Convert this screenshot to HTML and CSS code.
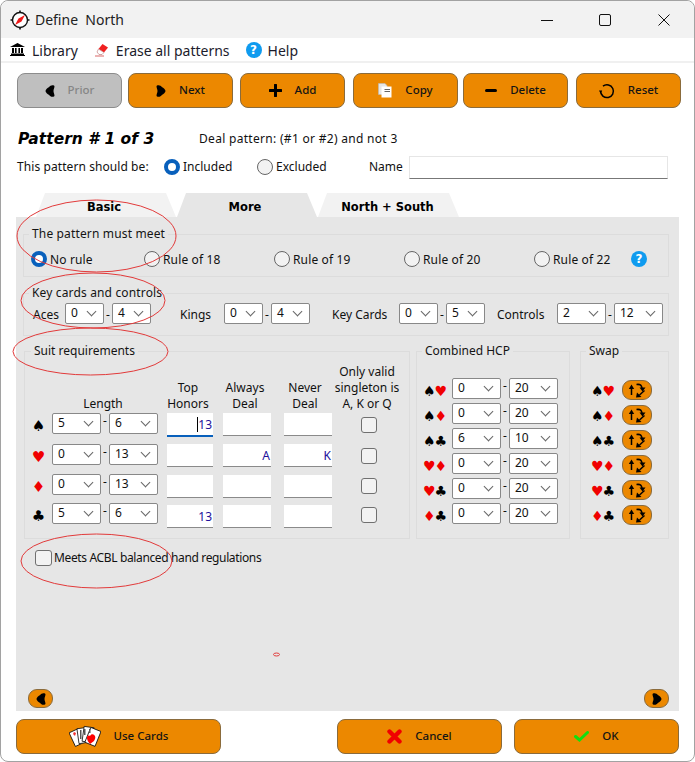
FILE: index.html
```html
<!DOCTYPE html>
<html lang="en">
<head>
<meta charset="utf-8">
<title>Define North</title>
<link rel="stylesheet" href="styles.css">
</head>
<body>
<svg class="defs" width="0" height="0" aria-hidden="true">
  <symbol id="heart-right" viewBox="0 0 10 12"><path d="M1 .5C3 -.3 5 .6 5.8 2C7.5 3 9.5 4.5 9.5 6C9.5 7.5 7.5 9 5.8 10C5 11.4 3 12.3 1 11.5C-.3 10.6 1.5 8 1.5 6C1.5 4 -.3 1.4 1 .5Z"/></symbol>
  <symbol id="swap" viewBox="0 0 22 18"><g fill="none" stroke="#000" stroke-width="1.5"><path d="M5.5 14V7"/><path d="M10.5 3.5C13.5 3 15.5 4 16 7"/><path d="M18.5 9.5L13.5 14"/></g><path d="M5.5 3.5L2.8 8H8.2Z"/><path d="M16.5 10.5L13.5 6.5H19.5Z"/><path d="M10 16.5L15.5 16L11 11.5Z"/></symbol>
</svg>
<div class="window">
  <header class="titlebar">
    <svg class="compass" width="20" height="20" viewBox="0 0 20 20"><circle cx="10" cy="10" r="7.5" fill="#fff" stroke="#111" stroke-width="1.4"/><path d="M10 0.5V3M10 17V19.5M0.5 10H3M17 10H19.5" stroke="#111" stroke-width="1.6"/><path d="M15 5L11.5 11.5L5 15L8.5 8.5Z" fill="#f01818"/></svg>
    <span class="title">Define&nbsp; North</span>
    <svg class="winctl win-min" width="12" height="12" viewBox="0 0 12 12"><path d="M0 6.5H12" stroke="#111"/></svg>
    <svg class="winctl win-max" width="12" height="12" viewBox="0 0 12 12"><rect x="0.5" y="0.5" width="11" height="11" rx="1.5" fill="none" stroke="#111"/></svg>
    <svg class="winctl win-close" width="12" height="12" viewBox="0 0 12 12"><path d="M0.5 0.5L11.5 11.5M11.5 0.5L0.5 11.5" stroke="#111"/></svg>
  </header>
  <nav class="menubar">
    <svg class="m-ic" width="15" height="13" viewBox="0 0 15 13"><path d="M7.5 0L15 4H0Z"/><path d="M2 5h2v5H2zM5 5h1.6v5H5zM8.4 5H10v5H8.4zM11 5h2v5h-2zM1 10.5h13V12H1zM0 12h15v1H0z"/></svg>
    <span class="m-txt m-lib">Library</span>
    <svg class="m-ic" width="14" height="14" viewBox="0 0 14 14"><path d="M7.5 1L13 4.5L9 9.5L3.5 6Z" fill="#f02020"/><path d="M3.5 6L9 9.5L7 11.5H4L2 9Z" fill="#fff" stroke="#c08080" stroke-width="0.7"/><path d="M0 13H9" stroke="#e08080" stroke-width="1.2"/></svg>
    <span class="m-txt m-erase">Erase all patterns</span>
    <span class="help m-help">?</span>
    <span class="m-txt">Help</span>
  </nav>
  <div class="toolbar">
    <button class="btn btn-off"><svg class="flip" width="10" height="12"><use href="#heart-right"/></svg><span class="t">Prior</span></button>
    <button class="btn"><svg width="10" height="12"><use href="#heart-right"/></svg><span class="t">Next</span></button>
    <button class="btn"><svg width="13" height="13" viewBox="0 0 13 13"><path d="M6.5 1V12M1 6.5H12" stroke="#000" stroke-width="3" stroke-linecap="round"/></svg><span class="t">Add</span></button>
    <button class="btn"><svg width="14" height="15" viewBox="0 0 14 15"><path d="M0.5 0.5H7L9 2.5V11.5H0.5Z" fill="#e6e6e6" stroke="#bbb" stroke-width="0.6"/><path d="M3.5 3.5H13.5V14.5H3.5Z" fill="#fff"/><path d="M6.5 6.5H12M6.5 8.5H12" stroke="#666"/></svg><span class="t">Copy</span></button>
    <button class="btn"><svg width="12" height="13" viewBox="0 0 12 13"><path d="M1.5 6.5H10.5" stroke="#000" stroke-width="3" stroke-linecap="round"/></svg><span class="t">Delete</span></button>
    <button class="btn"><svg width="16" height="16" viewBox="0 0 16 16"><path d="M4 3.2A6.4 6.4 0 1 1 1.6 8" fill="none" stroke="#000" stroke-width="1.5"/><path d="M0 7.5L3.2 7.5L1.6 10.5Z"/></svg><span class="t">Reset</span></button>
  </div>
  <div class="head-row">
    <h1 class="pattern">Pattern # 1 of 3</h1>
    <span class="deal">Deal pattern: (#1 or #2) and not 3</span>
  </div>
  <div class="opts-row">
    <span class="should">This pattern should be:</span>
    <span class="radio on"></span><span class="r-txt r-inc">Included</span>
    <span class="radio"></span><span class="r-txt r-exc">Excluded</span>
    <span class="name-lbl">Name</span>
    <span class="name-inp"></span>
  </div>
  <div class="tabs">
    <div class="tab tab-1">Basic</div>
    <div class="tab tab-2 active">More</div>
    <div class="tab tab-3">North + South</div>
  </div>
  <main class="panel">
    <fieldset class="box box-rule">
      <legend>The pattern must meet</legend>
      <div class="rules">
        <label class="rule rule-first"><span class="radio on"></span>No rule</label>
        <label class="rule"><span class="radio"></span>Rule of 18</label>
        <label class="rule"><span class="radio"></span>Rule of 19</label>
        <label class="rule"><span class="radio"></span>Rule of 20</label>
        <label class="rule rule-last"><span class="radio"></span>Rule of 22</label>
        <span class="help">?</span>
      </div>
    </fieldset>
    <fieldset class="box box-keys">
      <legend>Key cards and controls</legend>
      <div class="keys">
        <span class="k-aces">Aces</span><div class="sel">0</div><span class="dash">-</span><div class="sel">4</div>
        <span class="k-kings">Kings</span><div class="sel">0</div><span class="dash">-</span><div class="sel">4</div>
        <span class="k-cards">Key Cards</span><div class="sel">0</div><span class="dash">-</span><div class="sel">5</div>
        <span class="k-ctrl">Controls</span><div class="sel">2</div><span class="dash">-</span><div class="sel">12</div>
      </div>
    </fieldset>
    <div class="lower">
      <fieldset class="box box-suit">
        <legend>Suit requirements</legend>
        <div class="suit-grid">
          <span></span><span class="hd hd-len">Length</span>
          <span class="hd hd-top">Top<br>Honors</span><span class="hd hd-alw">Always<br>Deal</span><span class="hd hd-nev">Never<br>Deal</span><span class="hd hd-only">Only valid<br>singleton is<br>A, K or Q</span>

          <span class="suit">♠</span><div class="sel">5</div><span class="dash">-</span><div class="sel">6</div>
          <div class="inp inp-top focus"><i class="caret"></i>13</div><div class="inp"></div><div class="inp"></div><span class="chk"></span>

          <span class="suit red">♥</span><div class="sel">0</div><span class="dash">-</span><div class="sel">13</div>
          <div class="inp inp-top"></div><div class="inp">A</div><div class="inp">K</div><span class="chk"></span>

          <span class="suit red">♦</span><div class="sel">0</div><span class="dash">-</span><div class="sel">13</div>
          <div class="inp inp-top inp-r3"></div><div class="inp inp-r3"></div><div class="inp inp-r3"></div><span class="chk"></span>

          <span class="suit">♣</span><div class="sel">5</div><span class="dash">-</span><div class="sel">6</div>
          <div class="inp inp-top inp-r4">13</div><div class="inp inp-r4"></div><div class="inp inp-r4"></div><span class="chk"></span>
        </div>
      </fieldset>
      <fieldset class="box box-hcp">
        <legend>Combined HCP</legend>
        <div class="hcp-grid">
          <span class="pair">♠<b>♥</b></span><div class="sel">0</div><span class="dash">-</span><div class="sel">20</div>
          <span class="pair">♠<b>♦</b></span><div class="sel">0</div><span class="dash">-</span><div class="sel">20</div>
          <span class="pair">♠♣</span><div class="sel">6</div><span class="dash">-</span><div class="sel">10</div>
          <span class="pair"><b>♥♦</b></span><div class="sel">0</div><span class="dash">-</span><div class="sel">20</div>
          <span class="pair"><b>♥</b>♣</span><div class="sel">0</div><span class="dash">-</span><div class="sel">20</div>
          <span class="pair"><b>♦</b>♣</span><div class="sel">0</div><span class="dash">-</span><div class="sel">20</div>
        </div>
      </fieldset>
      <fieldset class="box box-swap">
        <legend>Swap</legend>
        <div class="swap-grid">
          <span class="pair">♠<b>♥</b></span><button class="swap-btn"><svg width="22" height="18"><use href="#swap"/></svg></button>
          <span class="pair">♠<b>♦</b></span><button class="swap-btn"><svg width="22" height="18"><use href="#swap"/></svg></button>
          <span class="pair">♠♣</span><button class="swap-btn"><svg width="22" height="18"><use href="#swap"/></svg></button>
          <span class="pair"><b>♥♦</b></span><button class="swap-btn"><svg width="22" height="18"><use href="#swap"/></svg></button>
          <span class="pair"><b>♥</b>♣</span><button class="swap-btn"><svg width="22" height="18"><use href="#swap"/></svg></button>
          <span class="pair"><b>♦</b>♣</span><button class="swap-btn"><svg width="22" height="18"><use href="#swap"/></svg></button>
        </div>
      </fieldset>
    </div>
    <label class="acbl"><span class="chk"></span>Meets ACBL balanced hand regulations</label>
    <div class="pager">
      <button class="page-btn"><svg class="flip" width="10" height="12"><use href="#heart-right"/></svg></button>
      <button class="page-btn"><svg width="10" height="12"><use href="#heart-right"/></svg></button>
    </div>
  </main>
  <footer class="footer">
    <button class="btn btn-use">
      <svg width="32" height="24" viewBox="0 0 32 24"><g stroke="#111" stroke-width="0.8" fill="#fff"><rect x="3" y="5" width="10" height="15" transform="rotate(-25 8 13)"/><rect x="9" y="3" width="10" height="15" transform="rotate(-8 14 11)"/><rect x="14" y="2" width="10" height="15" transform="rotate(8 19 10)"/><rect x="18" y="4" width="11" height="16" transform="rotate(22 24 13)"/></g><path d="M11 5h1.5v9H11zM15 4h1.5v6H15zM20 4h1.500v4H20z" fill="#555"/><path d="M5 7l2 1-1 3-2-2z" fill="#f03030"/><path d="M21 19C17 15 17 9 21 11C23 7 29 11 25 16Z" fill="#ff0000"/></svg>
      <span class="t">Use Cards</span>
    </button>
    <button class="btn btn-cancel"><svg width="15" height="15" viewBox="0 0 15 15"><path d="M2.5 2.5L12.5 12.5M12.5 2.5L2.5 12.5" stroke="#f00000" stroke-width="4.4" stroke-linecap="round"/></svg><span class="t">Cancel</span></button>
    <button class="btn btn-ok"><svg width="15" height="11" viewBox="0 0 15 11"><path d="M1.500 5.500L5.500 9L13.500 1.500" fill="none" stroke="#10e010" stroke-width="3" stroke-linecap="round"/></svg><span class="t">OK</span></button>
  </footer>
  <svg class="marks" width="695" height="762" viewBox="0 0 695 762">
    <ellipse cx="96.5" cy="236" rx="79.5" ry="36"/>
    <ellipse cx="93" cy="300.5" rx="72" ry="27.5"/>
    <ellipse cx="90.5" cy="351.5" rx="77.5" ry="23.5"/>
    <ellipse cx="96.5" cy="561" rx="75.5" ry="27"/>
    <ellipse cx="276.5" cy="654.5" rx="3" ry="1.5"/>
  </svg>
</div>
</body>
</html>
```

FILE: styles.css
```css
* { box-sizing: border-box; }
html, body { margin: 0; padding: 0; background: #fff; }
body { width: 695px; height: 762px; overflow: hidden; font: 12px/16px "Noto Sans", "DejaVu Sans", sans-serif; color: #111; }
.defs { position: absolute; }
.window { position: relative; width: 695px; height: 762px; display: flex; flex-direction: column; background: #fff; border: 1px solid #a2a2a2; border-radius: 8px; }

.titlebar { height: 37px; flex: none; background: #f2f2f2; display: flex; align-items: center; padding-left: 9px; border-radius: 8px 8px 0 0; }
.compass { flex: none; }
.title { margin-left: 5px; font-size: 14px; color: #222; }
.winctl { flex: none; }
.win-min { margin-left: auto; }
.win-max { margin-left: 46px; }
.win-close { margin-left: 47px; margin-right: 24px; }

.menubar { height: 25px; flex: none; display: flex; align-items: center; padding-left: 9px; border-bottom: 2px solid #f0f0f0; }
.m-txt { font-size: 14px; color: #1c1c2c; padding-top: 2px; }
.m-lib { margin-left: 7px; margin-right: 17px; }
.m-erase { margin-left: 7px; margin-right: 16px; }
.m-help { margin-right: 6px; }
.help { width: 16px; height: 16px; flex: none; border-radius: 50%; background: #0f9bef; color: #fff; font: bold 12px/16px "DejaVu Sans", sans-serif; text-align: center; }

.toolbar { display: grid; grid-template-columns: 111px 112px 113px 110px 113px 105px; margin: 10px 0 0 16px; }
.btn { width: 105px; height: 35px; display: flex; align-items: center; justify-content: center; gap: 13px; background: #ec8800; border: 1px solid #8a6b3c; border-radius: 8px; font: 500 11.5px/16px "Noto Sans", sans-serif; color: #141414; padding: 0; }
.btn svg { flex: none; }
.btn .t { padding-bottom: 2px; }
.btn-off { background: #bfbfbf; border-color: #8c8c8c; color: #868686; }
.flip { transform: scaleX(-1); }

.head-row { display: flex; align-items: center; height: 20px; margin: 21px 0 0 17px; }
.pattern { margin: 0; font: italic bold 15.5px/20px "DejaVu Sans", sans-serif; color: #000; width: 181px; }
.deal { color: #111; letter-spacing: .3px; }
.opts-row { display: flex; align-items: center; height: 24px; margin: 6px 0 0 16px; }
.should { width: 147px; letter-spacing: .08px; }
.radio { flex: none; display: inline-block; width: 16px; height: 16px; border-radius: 50%; background: #f2f2f2; border: 1px solid #666; }
.radio.on { background: #fff; border: 4.5px solid #0860bc; }
.r-txt { margin-left: 3px; }
.r-inc { width: 74px; }
.r-exc { width: 93px; }
.name-lbl { width: 40px; }
.name-inp { width: 259px; height: 23px; background: #fff; border: 1px solid #e6e6e6; border-bottom-color: #777; }

.tabs { display: flex; height: 24px; margin: 14px 0 0 35px; gap: 1px; }
.tab { font: bold 11.5px/28px "DejaVu Sans", sans-serif; text-align: center; color: #000; background: #f2f2f2; width: 140px; padding-right: 4px; }
.tab-1, .tab-2, .tab-3 { clip-path: polygon(0 100%, 9px 0, calc(100% - 10px) 0, 100% 100%); }
.tab.active { background: #e6e6e6; }
.tab-3 { width: 141px; padding-right: 2px; }

.panel { flex: 1; min-height: 0; margin: 0 15px; padding: 9px 10px 3px 7px; background: #e6e6e6; display: flex; flex-direction: column; }
.box { margin: 0; padding: 0; min-width: 0; border: 1px solid #dcdcdc; }
.box legend { margin-left: 5px; padding: 0 3px; line-height: 16px; color: #141414; }
.box-rule { height: 51px; }
.box-rule legend, .box-keys legend { letter-spacing: .15px; }
.rules { display: flex; align-items: flex-start; padding: 9px 0 0 7px; }
.rule { display: flex; align-items: flex-start; gap: 3px; width: 130px; flex: none; letter-spacing: .15px; line-height: 18px; }
.rule-first { width: 113px; }
.rule-last { width: 97px; }
.box-keys { height: 51px; margin-top: 8px; }
.keys { display: grid; grid-template-columns: 32px 39px 8px 39px 73px 39px 8px 39px 89px 39px 8px 39px 72px 49px 8px 49px; align-items: center; padding: 2px 0 0 9px; }
.keys span { padding-top: 2px; }
.k-kings { padding-left: 29px; }
.k-cards { padding-left: 22px; white-space: nowrap; }
.k-ctrl { padding-left: 12px; }
.dash { text-align: center; }

.sel { position: relative; height: 21px; background: #fff; border: 1px solid #888; border-radius: 2px; padding: 1px 0 0 5px; line-height: 16px; font-size: 12px; }
.sel::after { content: ""; position: absolute; right: 8px; top: 4px; width: 6px; height: 6px; border-right: 1px solid #666; border-bottom: 1px solid #666; transform: rotate(45deg); }

.lower { display: flex; margin: 7px 0 0 1px; }
.box-suit { width: 386px; height: 196px; }
.box-suit legend { margin-left: 6px; }
.suit-grid { display: grid; grid-template-columns: 27px 49px 8px 49px 64px 50px 72px 50px; grid-template-rows: 54px 31px 30px 29px 30px; }
.hd { align-self: end; text-align: center; padding-bottom: 1px; white-space: nowrap; }
.hd-len { grid-column: 2 / 5; margin-right: 4px; }
.hd-top, .hd-alw { margin-right: 4px; }
.hd-nev { margin-right: 6px; }
.hd-only { justify-self: center; margin-right: 4px; }
.suit { font: 15px/21px "DejaVu Sans", sans-serif; text-align: center; color: #000; padding-top: 3px; }
.red, .pair b { color: #f00000; font-weight: normal; }
.inp { justify-self: center; width: 48px; height: 23px; background: #fff; border-bottom: 1px solid #8a8a8a; text-align: right; padding: 3.5px 1px 0 0; color: #22109a; }
.inp-top { width: 46px; }
.inp.focus { height: 24px; border-bottom: 2px solid #0860bc; }
.inp-r3 { margin-top: 1px; }
.inp-r4 { margin-top: 2px; }
.caret { display: inline-block; width: 1px; height: 15px; background: #000; vertical-align: -3px; }
.chk { display: block; justify-self: center; width: 16px; height: 16px; background: #f2f2f2; border: 1px solid #707070; border-radius: 3px; margin-top: 4px; }

.box-hcp { width: 154px; margin-left: 6px; }
.hcp-grid { display: grid; grid-template-columns: 35px 49px 8px 49px; grid-auto-rows: 21px; row-gap: 4px; padding-top: 19px; }
.pair { font: 14px/21px "DejaVu Sans", sans-serif; text-align: center; color: #000; white-space: nowrap; letter-spacing: -1px; padding-top: 3px; }
.box-swap { width: 89px; margin-left: 10px; }
.swap-grid { display: grid; grid-template-columns: 41px 30px; grid-auto-rows: 20px; row-gap: 5px; padding-top: 21px; }
.swap-grid .pair { padding: 1px 0 0 2px; }
.swap-btn { width: 30px; height: 20px; background: #ec8800; border: 1px solid #8a6b3c; border-radius: 9px; padding: 0; display: flex; align-items: center; justify-content: center; }

.acbl { display: flex; align-items: center; margin: 11px 0 0 12px; height: 16px; letter-spacing: -.36px; }
.acbl .chk { margin: 0 2px 0 0; width: 17px; height: 16px; }
.pager { margin-top: auto; display: flex; justify-content: space-between; padding-left: 5px; }
.page-btn { width: 25px; height: 19px; background: #ec8800; border: 1px solid #8a6b3c; border-radius: 9px; padding: 0; display: flex; align-items: center; justify-content: center; }

.footer { flex: none; display: flex; height: 50px; padding: 8px 15px 0; }
.btn-use { width: 205px; }
.btn-cancel { width: 165px; margin-left: auto; }
.btn-ok { width: 165px; margin-left: 12px; }

.marks { position: absolute; left: -1px; top: -1px; pointer-events: none; }
.marks ellipse { fill: none; stroke: #e23a3a; stroke-width: 1; }
```
